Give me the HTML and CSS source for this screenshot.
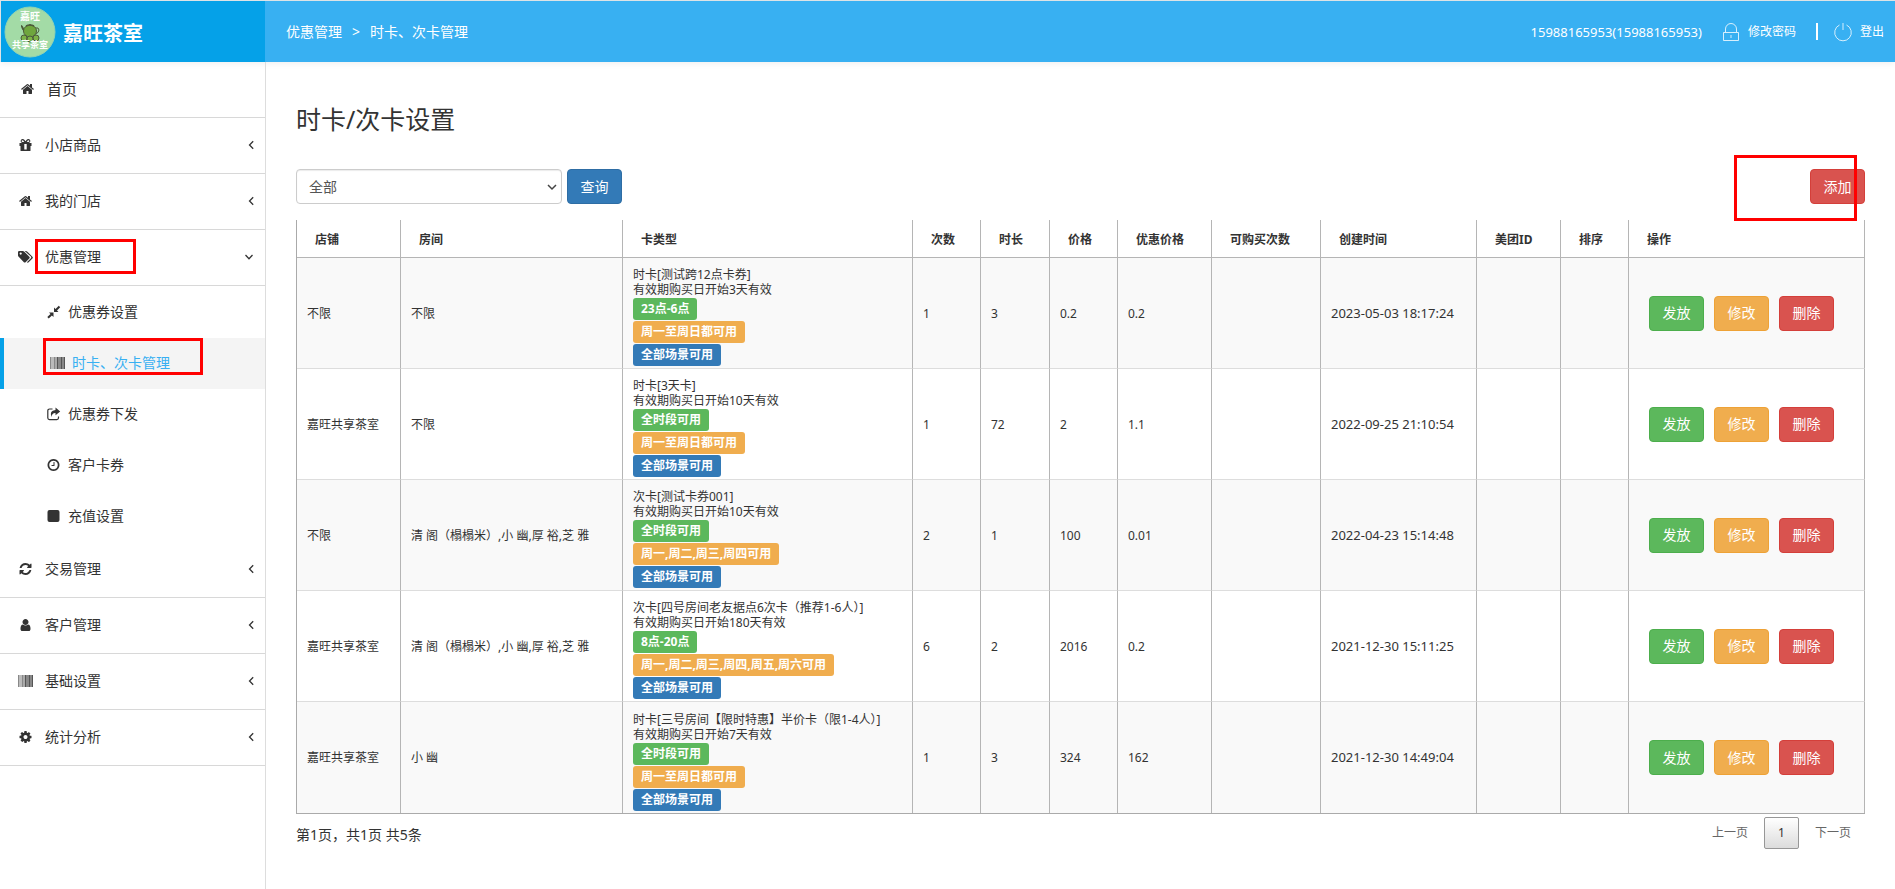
FILE: index.html
```
<!DOCTYPE html>
<html lang="zh-CN">
<head>
    <meta charset="UTF-8">
    <meta name="viewport" content="width=device-width, initial-scale=1.0">
    <title>时卡、次卡管理</title>
    <link rel="stylesheet" href="styles.css">
</head>
<body>
    <svg class="sprite" aria-hidden="true">
        <symbol id="i-home" viewBox="0 0 1792 1792"><path d="M1472 992v480q0 26-19 45t-45 19h-384v-384h-256v384h-384q-26 0-45-19t-19-45v-480q0-1 .5-3t.5-3l575-474 575 474q1 2 1 6zm223-69l-62 74q-8 9-21 11h-3q-13 0-21-7l-692-577-692 577q-12 8-24 7-13-2-21-11l-62-74q-8-10-7-23.5t11-21.5l719-599q32-26 76-26t76 26l244 204v-195q0-14 9-23t23-9h192q14 0 23 9t9 23v408l219 182q10 8 11 21.5t-7 23.5z"/></symbol>
        <symbol id="i-gift" viewBox="0 0 14 14"><path fill-rule="evenodd" d="M1 5h4.500L4 5a2 2 0 1 1 1.800-3.200L7 3.300l1.200-1.500A2 2 0 1 1 10 5h3v3h-1v4.500a.6.6 0 0 1-.6.6H2.600a.6.600 0 0 1-.6-.6V8H1zM4 2.200a.9.900 0 0 0 0 1.800h1.700L4.700 2.600A.9.900 0 0 0 4 2.200zm6 0a.9.900 0 0 0-.7.400L8.300 4H10a.9.900 0 0 0 0-1.800zM5.800 6v5.500h2.400V6z"/></symbol>
        <symbol id="i-tags" viewBox="0 0 15 14"><path fill-rule="evenodd" d="M0 2.200Q0 1 1.200 1h3.500q.9 0 1.600.7l5 5q.9.800 0 1.700l-3.700 3.800q-.9.800-1.700 0l-5-5.100Q0 6.200 0 5.500zm2.700.3a1.100 1.100 0 1 0 0 2.200 1.100 1.100 0 0 0 0-2.200zM6.700 1h1.100q.9 0 1.600.7l5 5q.9.800 0 1.700l-3.700 3.800q-.9.800-1.800.1l4-4.100q.7-.8 0-1.600z"/></symbol>
        <symbol id="i-compress" viewBox="0 0 14 14"><path d="M7 7.500V12L5.400 10.400 2.200 13.500.8 12.100 4 8.900 2.500 7.500zM7.500 7V2.500L9 4 12.300.8l1.400 1.400L10.500 5.400 12 7z"/></symbol>
        <symbol id="i-barcode" viewBox="0 0 15 12"><path fill="#bbb" d="M1 0h4v12H1z"/><path fill="#888" d="M0 0h1v12H0zM4 0h1v12H4zM8 0h7v12H8z"/><path fill="#555" d="M7 0h1v12H7zM11 0h1v12h-1zM14 0h1v12h-1z"/><path fill="#aaa" d="M5 0h2v12H5z"/></symbol>
        <symbol id="i-share" viewBox="0 0 14 14"><path fill="none" stroke="currentColor" stroke-width="1.200" d="M6 2H3a1.700 1.700 0 0 0-1.700 1.700V11A1.700 1.700 0 0 0 3 12.600h7.300A1.700 1.700 0 0 0 12 11V9.500"/><path d="M9 .6L13.700 4.500 9 8.300V6Q5.500 5.800 5 10 2.500 3.500 9 3z"/></symbol>
        <symbol id="i-clock" viewBox="0 0 1792 1792"><path d="M1024 544v448q0 14-9 23t-23 9h-320q-14 0-23-9t-9-23v-64q0-14 9-23t23-9h224v-352q0-14 9-23t23-9h64q14 0 23 9t9 23zm416 352q0-148-73-273t-198-198-273-73-273 73-198 198-73 273 73 273 198 198 273 73 273-73 198-198 73-273zm224 0q0 209-103 385.500t-279.500 279.500-385.500 103-385.500-103-279.500-279.500-103-385.500 103-385.500 279.500-279.500 385.500-103 385.500 103 279.500 279.500 103 385.500z"/></symbol>
        <symbol id="i-square" viewBox="0 0 14 14"><rect x="1" y="1" width="12" height="12" rx="2"/></symbol>
        <symbol id="i-refresh" viewBox="0 0 1792 1792"><path d="M1639 1056q0 5-1 7-64 268-268 434.500t-478 166.500q-146 0-282.500-55t-243.500-157l-129 129q-19 19-45 19t-45-19-19-45v-448q0-26 19-45t45-19h448q26 0 45 19t19 45-19 45l-137 137q71 66 161 102t187 36q134 0 250-65t186-179q11-17 53-117 8-23 30-23h192q13 0 22.500 9.500t9.500 22.500zm25-800v448q0 26-19 45t-45 19h-448q-26 0-45-19t-19-45 19-45l138-138q-148-137-349-137-134 0-250 65t-186 179q-11 17-53 117-8 23-30 23h-199q-13 0-22.500-9.500t-9.500-22.500v-7q65-268 270-434.500t480-166.500q146 0 284 55.500t245 156.500l130-129q19-19 45-19t45 19 19 45z"/></symbol>
        <symbol id="i-user" viewBox="0 0 1792 1792"><path d="M1536 1399q0 109-62.500 187t-150.500 78h-854q-88 0-150.500-78t-62.500-187q0-85 8.500-160.500t31.500-152 58.500-131 94-89 134.500-34.500q131 128 313 128t313-128q76 0 134.500 34.500t94 89 58.500 131 31.500 152 8.500 160.500zm-256-887q0 159-112.500 271.500t-271.500 112.500-271.500-112.500-112.500-271.500 112.500-271.500 271.500-112.500 271.500 112.500 112.500 271.500z"/></symbol>
        <symbol id="i-cog" viewBox="0 0 1792 1792"><path d="M1152 896q0-106-75-181t-181-75-181 75-75 181 75 181 181 75 181-75 75-181zm512-109v222q0 12-8 23t-20 13l-185 28q-19 54-39 91 35 50 107 138 10 12 10 25t-9 23q-27 37-99 108t-94 71q-12 0-26-9l-138-108q-44 23-91 38-16 136-29 186-7 28-36 28h-222q-14 0-24.500-8.500t-11.500-21.500l-28-184q-49-16-90-37l-141 107q-10 9-25 9-14 0-25-11-126-114-165-168-7-10-7-23 0-12 8-23 15-21 51-66.500t54-70.500q-27-50-41-99l-183-27q-13-2-21-12.500t-8-23.500v-222q0-12 8-23t19-13l186-28q14-46 39-92-40-57-107-138-10-12-10-24 0-10 9-23 26-36 98.500-107.500t94.500-71.500q13 0 26 10l138 107q44-23 91-38 16-136 29-186 7-28 36-28h222q14 0 24.500 8.500t11.500 21.500l28 184q49 16 90 37l142-107q9-9 24-9 13 0 25 10 129 119 165 170 7 8 7 22 0 12-8 23-15 21-51 66.500t-54 70.500q26 50 41 98l183 28q13 2 21 12.500t8 23.500z"/></symbol>
        <symbol id="i-left" viewBox="0 0 6 10"><path fill="none" stroke="currentColor" stroke-width="1.300" d="M5.200 1.200L1.500 5l3.700 3.800"/></symbol>
        <symbol id="i-down" viewBox="0 0 10 10"><path fill="none" stroke="currentColor" stroke-width="1.300" d="M1.500 3L5 6.700 8.500 3"/></symbol>
    </svg>

    <header class="topbar">
        <div class="brand">
            <svg class="logo" viewBox="0 0 52 52" role="img" aria-label="嘉旺共享茶室">
                <circle cx="26" cy="26" r="25" fill="#a3dba6" stroke="#8fd3b4"/>
                <text class="logo-text" x="26" y="14" font-size="10">嘉旺</text>
                <path d="M17 20q1 0 2 3l3 3" fill="none" stroke="#4c5b3a" stroke-width="2"/>
                <path d="M31 22q4-1 4 2t-4 4" fill="none" stroke="#4c5b3a"/>
                <ellipse cx="26" cy="25" rx="6.500" ry="6" fill="#6fa63d" stroke="#4c5b3a"/>
                <path d="M22 20q4-2 8 0M26 18v1" fill="none" stroke="#4c5b3a" stroke-width="1.500"/>
                <circle cx="20" cy="32" r="3" fill="#7db347" stroke="#4c5b3a"/>
                <circle cx="32" cy="32" r="3" fill="#7db347" stroke="#4c5b3a"/>
                <circle cx="26" cy="33" r="3" fill="#7db347" stroke="#4c5b3a"/>
                <text class="logo-text" x="26" y="42" font-size="9">共享茶室</text>
            </svg>
            <span class="brand-name">嘉旺茶室</span>
        </div>
        <nav class="crumbs">
            <a href="#">优惠管理</a>
            <span>&gt;</span>
            <a href="#">时卡、次卡管理</a>
        </nav>
        <div class="account">
            <span class="phone">15988165953(15988165953)</span>
            <a class="account-link" href="#">
                <svg width="18" height="20" viewBox="0 0 18 20" fill="none" stroke="#fff" stroke-opacity=".8"><path d="M1.500 10.500h15v8h-15zM3.500 10V7a5.500 5.500 0 0 1 11 0v3M9 13v3"/></svg>
                修改密码
            </a>
            <span class="divider"></span>
            <a class="account-link" href="#">
                <svg width="18" height="20" viewBox="0 0 18 20" fill="none" stroke="#fff" stroke-opacity=".8"><path d="M5.500 3a8.300 8.300 0 1 0 7 0M9 1v7"/></svg>
                登出
            </a>
        </div>
    </header>

    <div class="layout">
        <aside class="sidebar">
            <ul class="menu">
                <li><a class="menu-item home" href="#"><svg class="icon"><use href="#i-home"/></svg>首页</a></li>
                <li><a class="menu-item" href="#"><svg class="icon"><use href="#i-gift"/></svg>小店商品<svg class="arrow"><use href="#i-left"/></svg></a></li>
                <li><a class="menu-item" href="#"><svg class="icon"><use href="#i-home"/></svg>我的门店<svg class="arrow"><use href="#i-left"/></svg></a></li>
                <li>
                    <a class="menu-item" href="#"><svg class="icon"><use href="#i-tags"/></svg>优惠管理<svg class="arrow open"><use href="#i-down"/></svg><span class="mark mark-menu"></span></a>
                    <ul class="submenu">
                        <li><a class="sub-item" href="#"><svg class="icon"><use href="#i-compress"/></svg>优惠券设置</a></li>
                        <li><a class="sub-item active" href="#"><svg class="icon"><use href="#i-barcode"/></svg>时卡、次卡管理<span class="mark mark-sub"></span></a></li>
                        <li><a class="sub-item" href="#"><svg class="icon"><use href="#i-share"/></svg>优惠券下发</a></li>
                        <li><a class="sub-item" href="#"><svg class="icon"><use href="#i-clock"/></svg>客户卡券</a></li>
                        <li><a class="sub-item" href="#"><svg class="icon"><use href="#i-square"/></svg>充值设置</a></li>
                    </ul>
                </li>
                <li><a class="menu-item" href="#"><svg class="icon"><use href="#i-refresh"/></svg>交易管理<svg class="arrow"><use href="#i-left"/></svg></a></li>
                <li><a class="menu-item" href="#"><svg class="icon"><use href="#i-user"/></svg>客户管理<svg class="arrow"><use href="#i-left"/></svg></a></li>
                <li><a class="menu-item" href="#"><svg class="icon"><use href="#i-barcode"/></svg>基础设置<svg class="arrow"><use href="#i-left"/></svg></a></li>
                <li><a class="menu-item" href="#"><svg class="icon"><use href="#i-cog"/></svg>统计分析<svg class="arrow"><use href="#i-left"/></svg></a></li>
            </ul>
        </aside>

        <main class="content">
            <h1>时卡/次卡设置</h1>

            <div class="toolbar">
                <div class="select-wrap">
                    <select class="shop-select" aria-label="店铺">
                        <option>全部</option>
                    </select>
                    <svg class="select-arrow" viewBox="0 0 10 10"><path fill="none" stroke="#444" stroke-width="1.500" d="M1 3l4 4 4-4"/></svg>
                </div>
                <button class="btn btn-primary" type="button">查询</button>
                <div class="add-wrap">
                    <button class="btn btn-danger" type="button">添加</button>
                    <span class="mark mark-add"></span>
                </div>
            </div>

            <table class="cards">
                <colgroup>
                    <col class="w-shop"><col class="w-room"><col class="w-type"><col class="w-num"><col class="w-hours"><col class="w-num">
                    <col class="w-sale"><col class="w-limit"><col class="w-time"><col class="w-mt"><col class="w-num"><col>
                </colgroup>
                <thead>
                    <tr>
                        <th>店铺</th><th>房间</th><th>卡类型</th><th>次数</th><th>时长</th><th>价格</th>
                        <th>优惠价格</th><th>可购买次数</th><th>创建时间</th><th>美团ID</th><th>排序</th><th>操作</th>
                    </tr>
                </thead>
                <tbody>
                    <tr>
                        <td>不限</td>
                        <td>不限</td>
                        <td class="type">
                            <div>时卡[测试跨12点卡券]</div>
                            <div>有效期购买日开始3天有效</div>
                            <div class="labels">
                                <span class="label green">23点-6点</span>
                                <span class="label orange">周一至周日都可用</span>
                                <span class="label blue">全部场景可用</span>
                            </div>
                        </td>
                        <td>1</td><td>3</td><td>0.2</td><td>0.2</td><td></td><td class="time">2023-05-03 18:17:24</td><td></td><td></td>
                        <td>
                            <div class="actions">
                                <button class="btn btn-success" type="button">发放</button>
                                <button class="btn btn-warning" type="button">修改</button>
                                <button class="btn btn-danger" type="button">删除</button>
                            </div>
                        </td>
                    </tr>
                    <tr>
                        <td>嘉旺共享茶室</td>
                        <td>不限</td>
                        <td class="type">
                            <div>时卡[3天卡]</div>
                            <div>有效期购买日开始10天有效</div>
                            <div class="labels">
                                <span class="label green">全时段可用</span>
                                <span class="label orange">周一至周日都可用</span>
                                <span class="label blue">全部场景可用</span>
                            </div>
                        </td>
                        <td>1</td><td>72</td><td>2</td><td>1.1</td><td></td><td class="time">2022-09-25 21:10:54</td><td></td><td></td>
                        <td>
                            <div class="actions">
                                <button class="btn btn-success" type="button">发放</button>
                                <button class="btn btn-warning" type="button">修改</button>
                                <button class="btn btn-danger" type="button">删除</button>
                            </div>
                        </td>
                    </tr>
                    <tr>
                        <td>不限</td>
                        <td>清 阁（榻榻米）,小 幽,厚 裕,芝 雅</td>
                        <td class="type">
                            <div>次卡[测试卡券001]</div>
                            <div>有效期购买日开始10天有效</div>
                            <div class="labels">
                                <span class="label green">全时段可用</span>
                                <span class="label orange">周一,周二,周三,周四可用</span>
                                <span class="label blue">全部场景可用</span>
                            </div>
                        </td>
                        <td>2</td><td>1</td><td>100</td><td>0.01</td><td></td><td class="time">2022-04-23 15:14:48</td><td></td><td></td>
                        <td>
                            <div class="actions">
                                <button class="btn btn-success" type="button">发放</button>
                                <button class="btn btn-warning" type="button">修改</button>
                                <button class="btn btn-danger" type="button">删除</button>
                            </div>
                        </td>
                    </tr>
                    <tr>
                        <td>嘉旺共享茶室</td>
                        <td>清 阁（榻榻米）,小 幽,厚 裕,芝 雅</td>
                        <td class="type">
                            <div>次卡[四号房间老友据点6次卡（推荐1-6人）]</div>
                            <div>有效期购买日开始180天有效</div>
                            <div class="labels">
                                <span class="label green">8点-20点</span>
                                <span class="label orange">周一,周二,周三,周四,周五,周六可用</span>
                                <span class="label blue">全部场景可用</span>
                            </div>
                        </td>
                        <td>6</td><td>2</td><td>2016</td><td>0.2</td><td></td><td class="time">2021-12-30 15:11:25</td><td></td><td></td>
                        <td>
                            <div class="actions">
                                <button class="btn btn-success" type="button">发放</button>
                                <button class="btn btn-warning" type="button">修改</button>
                                <button class="btn btn-danger" type="button">删除</button>
                            </div>
                        </td>
                    </tr>
                    <tr>
                        <td>嘉旺共享茶室</td>
                        <td>小 幽</td>
                        <td class="type">
                            <div>时卡[三号房间【限时特惠】半价卡（限1-4人）]</div>
                            <div>有效期购买日开始7天有效</div>
                            <div class="labels">
                                <span class="label green">全时段可用</span>
                                <span class="label orange">周一至周日都可用</span>
                                <span class="label blue">全部场景可用</span>
                            </div>
                        </td>
                        <td>1</td><td>3</td><td>324</td><td>162</td><td></td><td class="time">2021-12-30 14:49:04</td><td></td><td></td>
                        <td>
                            <div class="actions">
                                <button class="btn btn-success" type="button">发放</button>
                                <button class="btn btn-warning" type="button">修改</button>
                                <button class="btn btn-danger" type="button">删除</button>
                            </div>
                        </td>
                    </tr>
                </tbody>
            </table>

            <div class="table-foot">
                <span class="summary">第1页，共1页 共5条</span>
                <div class="pager">
                    <a href="#">上一页</a>
                    <a class="current" href="#">1</a>
                    <a href="#">下一页</a>
                </div>
            </div>
        </main>
    </div>
</body>
</html>
```
FILE: styles.css
```
* {
    box-sizing: border-box;
}
body {
    margin: 0;
    font-family: "Noto Sans", "Noto Sans CJK SC", sans-serif;
    font-size: 14px;
    line-height: 20px;
    color: #333;
    background-color: #fff;
    min-height: 100vh;
    display: flex;
    flex-direction: column;
}
a {
    color: inherit;
    text-decoration: none;
}
ul {
    list-style: none;
    margin: 0;
    padding: 0;
}
.sprite {
    position: absolute;
    width: 0;
    height: 0;
}

/* top bar */
.topbar {
    display: flex;
    height: 62px;
    border-top: 1px solid #dde3e6;
    background-color: #38b0f2;
    color: #fff;
    box-shadow: 0 2px 6px rgba(0, 0, 0, 0.06);
}
.brand {
    display: flex;
    align-items: center;
    gap: 7px;
    width: 265px;
    padding-left: 3px;
    border-left: 1px solid #dde3e6;
    background-color: #05a1e8;
}
.logo {
    width: 52px;
    height: 52px;
}
.logo-text {
    fill: #fff;
    font-weight: bold;
    text-anchor: middle;
}
.brand-name {
    font-size: 20px;
    font-weight: bold;
    line-height: 28px;
    padding-top: 4px;
}
.crumbs {
    display: flex;
    align-items: center;
    gap: 10px;
    padding-left: 21px;
}
.account {
    display: flex;
    align-items: center;
    margin-left: auto;
    padding-right: 11px;
    font-size: 12px;
}
.phone {
    margin-right: 20px;
    font-size: 13px;
}
.account-link {
    display: flex;
    align-items: center;
    gap: 8px;
}
.divider {
    width: 2px;
    height: 17px;
    margin: 0 16px 0 20px;
    background-color: #fff;
}

/* left menu */
.layout {
    display: flex;
    flex: 1;
}
.sidebar {
    flex: none;
    width: 266px;
    border-right: 1px solid #ddd;
}
.menu-item {
    position: relative;
    display: flex;
    align-items: center;
    gap: 12px;
    height: 56px;
    padding: 0 11px 1px 18px;
    border-bottom: 1px solid #d8d8d8;
}
.menu-item.home {
    padding-left: 20px;
    font-size: 15px;
}
.icon {
    flex: none;
    width: 15px;
    height: 14px;
    fill: currentColor;
}
.arrow {
    width: 6px;
    height: 10px;
    margin-left: auto;
}
.arrow.open {
    width: 10px;
}
.submenu {
    padding-top: 1px;
}
.sub-item {
    position: relative;
    display: flex;
    align-items: center;
    gap: 7px;
    height: 51px;
    padding: 0 0 2px 46px;
}
.sub-item.active {
    border-left: 4px solid #05a1e8;
    background-color: #f4f4f4;
    color: #38b0f2;
}

/* red callout frames */
.mark {
    position: absolute;
    border: 3px solid #f00;
    pointer-events: none;
}
.mark-menu {
    left: 35px;
    top: 9px;
    width: 101px;
    height: 35px;
}
.mark-sub {
    left: 39px;
    top: 0;
    width: 160px;
    height: 37px;
}
.mark-add {
    right: 8px;
    top: -14px;
    width: 123px;
    height: 66px;
}

/* content */
.content {
    flex: 1;
    min-width: 0;
    padding: 40px 30px 0;
}
h1 {
    margin: 0 0 32px;
    font-size: 25px;
    font-weight: normal;
    line-height: 35px;
}
.toolbar {
    display: flex;
    gap: 5px;
    margin-bottom: 16px;
}
.select-wrap {
    position: relative;
    width: 266px;
}
.shop-select {
    appearance: none;
    width: 100%;
    height: 35px;
    padding: 0 12px;
    border: 1px solid #ccc;
    border-radius: 4px;
    background-color: #fff;
    box-shadow: inset 0 1px 1px rgba(0, 0, 0, 0.08);
    font: inherit;
    color: #555;
}
.select-arrow {
    position: absolute;
    right: 5px;
    top: 13px;
    width: 10px;
    height: 10px;
    pointer-events: none;
}
.add-wrap {
    position: relative;
    margin-left: auto;
}
.btn {
    display: block;
    width: 55px;
    height: 35px;
    padding: 0;
    border: 1px solid transparent;
    border-radius: 4px;
    font-family: inherit;
    font-size: 14px;
    line-height: 20px;
    color: #fff;
    cursor: pointer;
}
.btn-primary {
    background-color: #337ab7;
    border-color: #2e6da4;
}
.btn-success {
    background-color: #5cb85c;
    border-color: #4cae4c;
}
.btn-warning {
    background-color: #f0ad4e;
    border-color: #eea236;
}
.btn-danger {
    background-color: #d9534f;
    border-color: #d43f3a;
}

/* table */
.cards {
    width: 100%;
    table-layout: fixed;
    border-collapse: separate;
    border-spacing: 0;
    border-left: 1px solid #aaa;
    border-bottom: 1px solid #aaa;
    font-size: 12px;
    line-height: 15px;
}
.w-shop { width: 104px; }
.w-room { width: 222px; }
.w-type { width: 290px; }
.w-num { width: 68px; }
.w-hours { width: 69px; }
.w-sale { width: 94px; }
.w-limit { width: 109px; }
.w-time { width: 156px; }
.w-mt { width: 84px; }
.cards th {
    height: 38px;
    padding: 2px 0 0 18px;
    border-right: 1px solid #b5b5b5;
    border-bottom: 1px solid #b5b5b5;
    text-align: left;
}
.cards td {
    height: 111px;
    padding: 0 0 0 10px;
    border-right: 1px solid #b5b5b5;
    border-bottom: 1px solid #ddd;
    vertical-align: middle;
    white-space: nowrap;
}
.cards tbody tr:nth-child(odd) {
    background-color: #f9f9f9;
}
.cards tbody tr:last-child td {
    border-bottom: none;
}
.cards td.type {
    padding-top: 7px;
}
.cards td.time {
    font-size: 13px;
}
.labels {
    display: flex;
    flex-direction: column;
    align-items: flex-start;
    gap: 1px;
    margin-top: 1px;
}
.label {
    height: 22px;
    padding: 0 8px;
    border-radius: 3px;
    color: #fff;
    font-weight: bold;
    line-height: 22px;
}
.green { background-color: #5cb85c; }
.orange { background-color: #f0ad4e; }
.blue { background-color: #337ab7; }
.actions {
    display: flex;
    gap: 10px;
    padding-left: 10px;
}

/* pager */
.table-foot {
    display: flex;
    justify-content: space-between;
    padding-top: 3px;
}
.summary {
    padding-top: 8px;
}
.pager {
    display: flex;
    gap: 2px;
    font-size: 12px;
    color: #666;
}
.pager a {
    height: 32px;
    padding: 0 13px;
    border: 1px solid transparent;
    border-radius: 2px;
    line-height: 30px;
}
.pager .current {
    border-color: #979797;
    background: linear-gradient(to bottom, #fff 0%, #dcdcdc 100%);
    color: #333;
}
```
